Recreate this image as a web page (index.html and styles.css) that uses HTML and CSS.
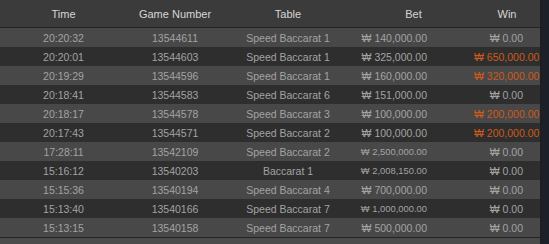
FILE: index.html
```html
<!DOCTYPE html>
<html>
<head>
<meta charset="utf-8">
<link rel="stylesheet" href="styles.css">
</head>
<body>
<div class="panel">
  <div class="row head">
    <div class="c">Time</div>
    <div class="c">Game Number</div>
    <div class="c">Table</div>
    <div class="c">Bet</div>
    <div class="c">Win</div>
  </div>
  <div class="row odd"><div class="c">20:20:32</div><div class="c">13544611</div><div class="c">Speed Baccarat 1</div><div class="r bet">₩ 140,000.00</div><div class="r win">₩ 0.00</div></div>
  <div class="row even"><div class="c">20:20:01</div><div class="c">13544603</div><div class="c">Speed Baccarat 1</div><div class="r bet">₩ 325,000.00</div><div class="r win hot">₩ 650,000.00</div></div>
  <div class="row odd"><div class="c">20:19:29</div><div class="c">13544596</div><div class="c">Speed Baccarat 1</div><div class="r bet">₩ 160,000.00</div><div class="r win hot">₩ 320,000.00</div></div>
  <div class="row even"><div class="c">20:18:41</div><div class="c">13544583</div><div class="c">Speed Baccarat 6</div><div class="r bet">₩ 151,000.00</div><div class="r win">₩ 0.00</div></div>
  <div class="row odd"><div class="c">20:18:17</div><div class="c">13544578</div><div class="c">Speed Baccarat 3</div><div class="r bet">₩ 100,000.00</div><div class="r win hot">₩ 200,000.00</div></div>
  <div class="row even"><div class="c">20:17:43</div><div class="c">13544571</div><div class="c">Speed Baccarat 2</div><div class="r bet">₩ 100,000.00</div><div class="r win hot">₩ 200,000.00</div></div>
  <div class="row odd"><div class="c">17:28:11</div><div class="c">13542109</div><div class="c">Speed Baccarat 2</div><div class="r bet small">₩ 2,500,000.00</div><div class="r win">₩ 0.00</div></div>
  <div class="row even"><div class="c">15:16:12</div><div class="c">13540203</div><div class="c">Baccarat 1</div><div class="r bet small">₩ 2,008,150.00</div><div class="r win">₩ 0.00</div></div>
  <div class="row odd"><div class="c">15:15:36</div><div class="c">13540194</div><div class="c">Speed Baccarat 4</div><div class="r bet">₩ 700,000.00</div><div class="r win">₩ 0.00</div></div>
  <div class="row even"><div class="c">15:13:40</div><div class="c">13540166</div><div class="c">Speed Baccarat 7</div><div class="r bet small">₩ 1,000,000.00</div><div class="r win">₩ 0.00</div></div>
  <div class="row odd"><div class="c">15:13:15</div><div class="c">13540158</div><div class="c">Speed Baccarat 7</div><div class="r bet">₩ 500,000.00</div><div class="r win">₩ 0.00</div></div>
  <div class="foot"></div>
</div>
</body>
</html>
```
FILE: styles.css
```css
html, body {
  margin: 0;
  padding: 0;
}
body {
  background: #1b2029;
  width: 549px;
  height: 244px;
  overflow: hidden;
  font-family: "Liberation Sans", Arial, sans-serif;
}
.panel {
  width: 540px;
  border-right: 2px solid #1e1e1e;
  background: #2d2d2d;
}
.row {
  display: grid;
  grid-template-columns: 127px 96px 130px 121px 66px;
  align-items: center;
  height: 19px;
  font-size: 10.5px;
  color: #a3a3a3;
  white-space: nowrap;
}
.row.head {
  height: 27px;
  background: #3b3b3b;
  border-bottom: 1px solid #232323;
  color: #d6d6d6;
  font-size: 11px;
}
.row.odd {
  background: #484848;
}
.row.even {
  background: #2e2e2e;
}
.c {
  text-align: center;
}
.r {
  text-align: right;
}
.bet {
  padding-right: 47px;
}
.bet.small {
  font-size: 9.4px;
}
.win {
  padding-right: 17px;
}
.hot {
  color: #cc5a1c;
}
.foot {
  height: 6px;
  border-top: 1px solid #242424;
  background: #4b4b4b;
}
```
